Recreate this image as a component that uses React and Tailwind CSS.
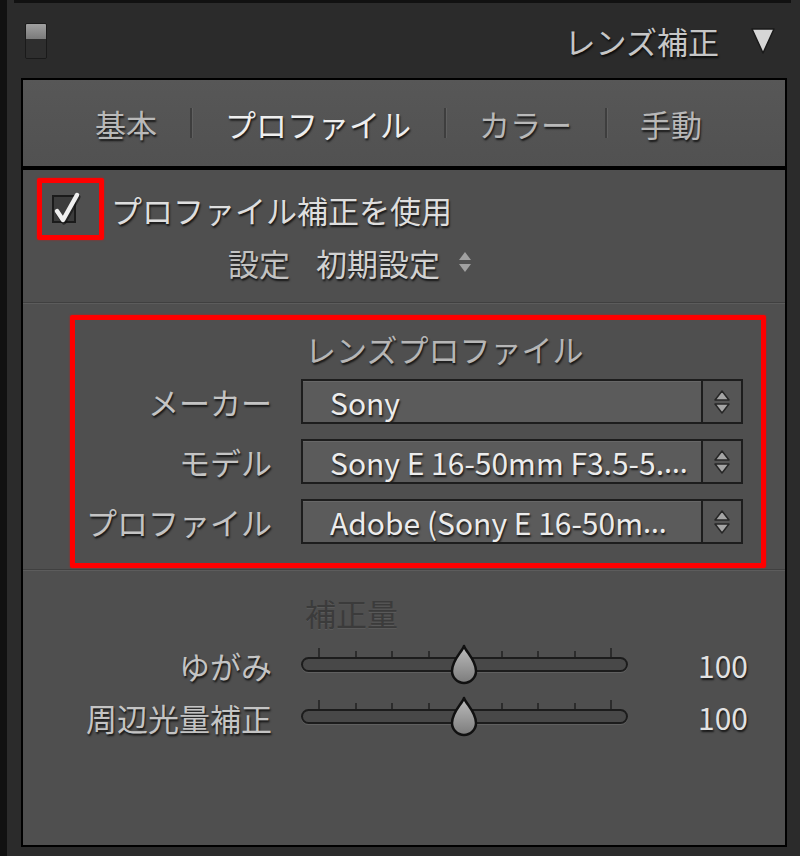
import React from 'react';

const font = "font-['Noto_Sans_CJK_JP','Noto_Sans',sans-serif]";
const shadow = "[text-shadow:1px_2px_2px_rgba(0,0,0,0.75)]";

const UpDown = () => (
  <svg width="18" height="26" viewBox="0 0 18 26">
    <path d="M9 2 L16 11 L2 11 Z" fill="#a4a4a4" stroke="#262626" strokeWidth="1.5" strokeLinejoin="round" />
    <path d="M9 24 L16 15 L2 15 Z" fill="#a4a4a4" stroke="#262626" strokeWidth="1.5" strokeLinejoin="round" />
  </svg>
);

const Select = ({ children }) => (
  <div className="flex h-[45px] border-2 border-[#1d1d1d] bg-[#5b5b5b] shadow-[inset_0_1px_0_rgba(255,255,255,0.08)]">
    <div className={`flex-1 min-w-0 flex items-center pl-[27px] pr-[8px] text-[30px] leading-none text-[#ececec] whitespace-nowrap overflow-hidden ${shadow}`}>
      {children}
    </div>
    <div className="w-[40px] border-l-2 border-[#1d1d1d] bg-[#555555] flex items-center justify-center">
      <UpDown />
    </div>
  </div>
);

const Slider = () => (
  <div className="relative w-[327px] h-[52px]">
    <div className="absolute left-[17px] right-[16px] top-[9px] flex justify-between items-end">
      {[0, 1, 2, 3, 4, 5, 6, 7, 8].map((i) => (
        <div
          key={i}
          className={i === 0 || i === 8 ? "w-[2px] h-[9px] bg-[#2c2c2c]" : "w-[2px] h-[6px] bg-[#2c2c2c]"}
        />
      ))}
    </div>
    <div className="absolute left-0 right-0 top-[18px] h-[15px] rounded-full border-2 border-[#1c1c1c] bg-[#484848] shadow-[0_1px_0_rgba(255,255,255,0.1)]" />
    <svg className="absolute left-[148px] top-[5px]" width="30" height="42" viewBox="0 0 30 42">
      <defs>
        <linearGradient id="thumb" x1="0" y1="0" x2="0" y2="1">
          <stop offset="0" stopColor="#bdbdbd" />
          <stop offset="1" stopColor="#7c7c7c" />
        </linearGradient>
      </defs>
      <path d="M15 2 C17 8 27 16 27 27 A12 12 0 0 1 3 27 C3 16 13 8 15 2 Z" fill="url(#thumb)" stroke="#111" strokeWidth="2.5" strokeLinejoin="round" />
    </svg>
  </div>
);

const Separator = ({ className = "" }) => (
  <div className={`h-[2px] border-t border-[#404040] border-b border-b-[#5c5c5c] ${className}`} />
);

export default function App() {
  return (
    <div className={`w-[800px] h-[856px] bg-[#2b2b2b] flex overflow-hidden ${font}`}>
      <div className="w-[7px] h-full bg-[#111111]" />
      <div className="flex-1 flex flex-col">
        {/* bottom of the panel above */}
        <div className="h-[3px] ml-[7px] w-[777px] border-x-[3px] border-b-[3px] border-[#111111]" />

        {/* Header */}
        <div className="ml-[14px] w-[766px] h-[75px] flex items-center">
          <div className="ml-[4px] w-[22px] h-[36px] flex flex-col border border-[#1a1a1a] rounded-[2px] overflow-hidden">
            <div className="h-[15px] bg-gradient-to-b from-[#a0a0a0] to-[#7a7a7a]" />
            <div className="flex-1 bg-[#2e2e2e]" />
          </div>
          <div className="flex-1" />
          <span className={`text-[31px] leading-none text-[#c6c6c6] ${shadow}`}>レンズ補正</span>
          <svg className="ml-[31px] mr-[11px]" width="26" height="30" viewBox="0 0 26 30">
            <path d="M2 3 L24 3 L13 27 Z" fill="#d6d6d6" stroke="#1a1a1a" strokeWidth="1.5" strokeLinejoin="round" />
          </svg>
        </div>

        {/* Tabs */}
        <div className="ml-[14px] w-[766px] h-[90px] border-2 border-black bg-gradient-to-b from-[#575757] to-[#515151] flex items-center pl-[72px] gap-x-[33px]">
          <span className={`text-[31px] leading-none text-[#b9b9b9] ${shadow}`}>基本</span>
          <div className="w-[2px] h-[30px] bg-[#3e3e3e] shadow-[1px_0_0_rgba(255,255,255,0.07)]" />
          <span className={`text-[31px] leading-none text-[#eeeeee] ${shadow}`}>プロファイル</span>
          <div className="w-[2px] h-[30px] bg-[#3e3e3e] shadow-[1px_0_0_rgba(255,255,255,0.07)]" />
          <span className={`text-[31px] leading-none text-[#b9b9b9] ${shadow}`}>カラー</span>
          <div className="w-[2px] h-[30px] bg-[#3e3e3e] shadow-[1px_0_0_rgba(255,255,255,0.07)]" />
          <span className={`text-[31px] leading-none text-[#b9b9b9] ${shadow}`}>手動</span>
        </div>

        {/* Main panel */}
        <div className="ml-[14px] w-[766px] h-[679px] border-2 border-black bg-[#4f4f4f] flex flex-col">
          {/* Enable profile */}
          <div className="h-[132px] pt-[8px] pl-[14px]">
            <div className="flex items-center">
              <div className="w-[67px] h-[62px] border-[5px] border-[#ff0000] rounded-[2px] shadow-[0_0_2px_rgba(255,0,0,0.6)] flex items-center pl-[10px]">
                <div className="relative w-[24px] h-[28px] border-2 border-[#1b1b1b] bg-[#3c3c3c]">
                  <svg className="absolute left-[-3px] top-[-7px]" width="32" height="36" viewBox="0 0 32 36">
                    <path d="M6 21 L12 30 L26 5" fill="none" stroke="#111" strokeOpacity="0.6" strokeWidth="5" strokeLinecap="round" strokeLinejoin="round" transform="translate(1 2)" />
                    <path d="M6 21 L12 30 L26 5" fill="none" stroke="#efefef" strokeWidth="4.5" strokeLinecap="round" strokeLinejoin="round" />
                  </svg>
                </div>
              </div>
              <span className={`ml-[7px] text-[31px] leading-none text-[#dedede] ${shadow}`}>プロファイル補正を使用</span>
            </div>
            <div className="h-[44px] flex items-center pl-[191px]">
              <span className={`text-[31px] leading-none text-[#c2c2c2] ${shadow}`}>設定</span>
              <span className={`ml-[26px] text-[31px] leading-none text-[#d2d2d2] ${shadow}`}>初期設定</span>
              <svg className="ml-[17px]" width="16" height="26" viewBox="0 0 16 26">
                <path d="M8 3 L14 11 L2 11 Z" fill="#a0a0a0" />
                <path d="M8 23 L14 15 L2 15 Z" fill="#a0a0a0" />
              </svg>
            </div>
          </div>

          <Separator />

          {/* Lens profile */}
          <div className="pt-[11px] ml-[47px] mr-[19px]">
            <div className="border-[5px] border-[#ff0000] rounded-[2px] shadow-[0_0_2px_rgba(255,0,0,0.6)] pt-[8px] pb-[19px]">
              <div className="grid grid-cols-[197px_442px] gap-x-[29px]">
                <div />
                <div className={`h-[40px] flex items-center pl-[4px] text-[31px] leading-none text-[#b6b6b6] ${shadow}`}>レンズプロファイル</div>
              </div>
              <div className="mt-[11px] grid grid-cols-[197px_442px] gap-x-[29px] gap-y-[15px] items-center">
                <div className={`text-right text-[31px] leading-none text-[#c4c4c4] ${shadow}`}>メーカー</div>
                <Select>Sony</Select>
                <div className={`text-right text-[31px] leading-none text-[#c4c4c4] ${shadow}`}>モデル</div>
                <Select>
                  Sony E 16-50mm F3.5-5.<span className="font-['Noto_Sans',sans-serif]">…</span>
                </Select>
                <div className={`text-right text-[31px] leading-none text-[#c4c4c4] ${shadow}`}>プロファイル</div>
                <Select>
                  Adobe (Sony E 16-50m<span className="font-['Noto_Sans',sans-serif]">…</span>
                </Select>
              </div>
            </div>
          </div>

          <Separator className="mt-[1px]" />

          {/* Amount */}
          <div className="pt-[21px]">
            <div className="grid grid-cols-[249px_327px_91px] gap-x-[29px]">
              <div />
              <div className="h-[40px] flex items-center pl-[4px] text-[31px] leading-none text-[#3b3b3b] [text-shadow:0_1px_0_rgba(255,255,255,0.08)]">補正量</div>
            </div>
            <div className="mt-[7px] grid grid-cols-[249px_327px_91px] gap-x-[29px] auto-rows-[52px] items-center">
              <div className={`text-right text-[31px] leading-none text-[#c4c4c4] ${shadow}`}>ゆがみ</div>
              <Slider />
              <div className={`text-right text-[30px] leading-none text-[#e2e2e2] ${shadow}`}>100</div>
              <div className={`text-right text-[31px] leading-none text-[#c4c4c4] ${shadow}`}>周辺光量補正</div>
              <Slider />
              <div className={`text-right text-[30px] leading-none text-[#e2e2e2] ${shadow}`}>100</div>
            </div>
          </div>
        </div>
      </div>
    </div>
  );
}
